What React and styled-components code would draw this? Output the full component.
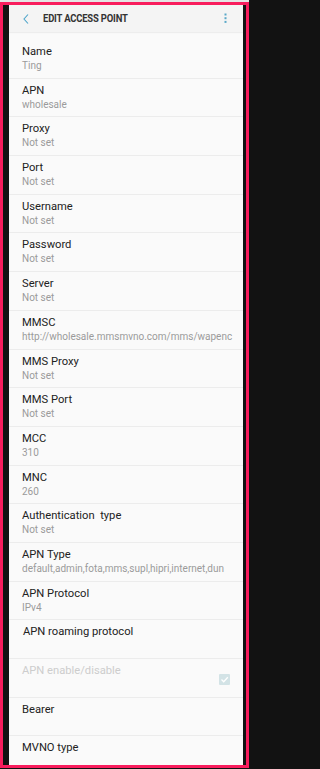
import React from 'react';
import styled, { createGlobalStyle } from 'styled-components';

const Global = createGlobalStyle`
    html, body {
        margin : 0;
        padding : 0;
        background : #121212;
    }
    * {
        box-sizing : border-box;
    }
`;

const Page = styled.div`
    width : 254px;
    height : 769px;
    display : flex;
    flex-direction : column;
    background : #121212;
    font-family : Roboto, "Noto Sans", sans-serif;
`;

const StatusStrip = styled.div`
    width : 249px;
    height : 2px;
    flex : none;
    background : #e4e4e4;
`;

const Frame = styled.div`
    width : 249px;
    height : 766px;
    flex : none;
    border : 3px solid #f81d5d;
    background : #121212;
    padding : 0 3px 0 6px;
    display : flex;
`;

const Screen = styled.div`
    flex : 1;
    background : #fafafa;
    display : flex;
    flex-direction : column;
    overflow : hidden;
`;

const Header = styled.div`
    height : 27px;
    flex : none;
    background : #f4f4f4;
    display : flex;
    align-items : center;
    padding : 0 16px 0 14px;
    box-shadow : 0 1px 1px rgba(0,0,0,0.05);
    position : relative;
    z-index : 1;
`;

const Title = styled.span`
    flex : 1;
    margin-left : 14px;
    font-size : 10.5px;
    font-weight : 700;
    color : #333;
    letter-spacing : -0.2px;
    transform : scaleX(0.9);
    transform-origin : left center;
    white-space : nowrap;
`;

const List = styled.div`
    flex : none;
    padding-top : 8px;
`;

const Row = styled.div`
    height : 38.7px;
    border-bottom : 1px solid #ececec;
    padding : 5px 13px 0 ${props => props.indent || 13}px;
    display : flex;
    justify-content : space-between;
    &:last-child {
        border-bottom : none;
    }
`;

const Texts = styled.div`
    display : flex;
    flex-direction : column;
`;

const Label = styled.span`
    font-size : 11.2px;
    line-height : 14px;
    color : ${props => props.disabled ? '#cdcdcd' : '#222222'};
    white-space : pre;
`;

const Value = styled.span`
    margin-top : 1px;
    font-size : 10px;
    line-height : 12px;
    color : #9b9b9b;
    white-space : nowrap;
`;

const CheckBox = styled.svg`
    margin-top : 10px;
    flex : none;
`;

const BackIcon = () => (
    <svg width="6" height="10" viewBox="0 0 6 10">
        <polyline points="5,0.5 1,5 5,9.5" fill="none" stroke="#4ea5ca" strokeWidth="1.1" />
    </svg>
);

const MoreIcon = () => (
    <svg width="3" height="11" viewBox="0 0 3 11">
        <rect x="0.5" y="0.5" width="2" height="2" fill="#5aa8c8" />
        <rect x="0.5" y="4.2" width="2" height="2" fill="#5aa8c8" />
        <rect x="0.5" y="7.9" width="2" height="2" fill="#5aa8c8" />
    </svg>
);

const fields = [
    { label : 'Name', value : 'Ting' },
    { label : 'APN', value : 'wholesale' },
    { label : 'Proxy', value : 'Not set' },
    { label : 'Port', value : 'Not set' },
    { label : 'Username', value : 'Not set' },
    { label : 'Password', value : 'Not set' },
    { label : 'Server', value : 'Not set' },
    { label : 'MMSC', value : 'http://wholesale.mmsmvno.com/mms/wapenc' },
    { label : 'MMS Proxy', value : 'Not set' },
    { label : 'MMS Port', value : 'Not set' },
    { label : 'MCC', value : '310' },
    { label : 'MNC', value : '260' },
    { label : 'Authentication  type', value : 'Not set' },
    { label : 'APN Type', value : 'default,admin,fota,mms,supl,hipri,internet,dun' },
    { label : 'APN Protocol', value : 'IPv4' },
    { label : 'APN roaming protocol', indent : 14 },
    { label : 'APN enable/disable', disabled : true, check : true },
    { label : 'Bearer' },
    { label : 'MVNO type' },
];

const App = () => {
    return <Page>
        <Global />
        <StatusStrip />
        <Frame>
            <Screen>
                <Header>
                    <BackIcon />
                    <Title>EDIT ACCESS POINT</Title>
                    <MoreIcon />
                </Header>
                <List>
                    {fields.map((f, index) =>
                        <Row key={index} indent={f.indent}>
                            <Texts>
                                <Label disabled={f.disabled}>{f.label}</Label>
                                {f.value && <Value>{f.value}</Value>}
                            </Texts>
                            {f.check &&
                                <CheckBox width="11" height="11" viewBox="0 0 11 11">
                                    <rect x="0" y="0" width="11" height="11" rx="1" fill="#d3e3e6" />
                                    <polyline points="2.5,5.5 4.7,7.7 8.8,3.2" fill="none" stroke="#ffffff" strokeWidth="1.3" />
                                </CheckBox>
                            }
                        </Row>
                    )}
                </List>
            </Screen>
        </Frame>
    </Page>
}

export default App;
